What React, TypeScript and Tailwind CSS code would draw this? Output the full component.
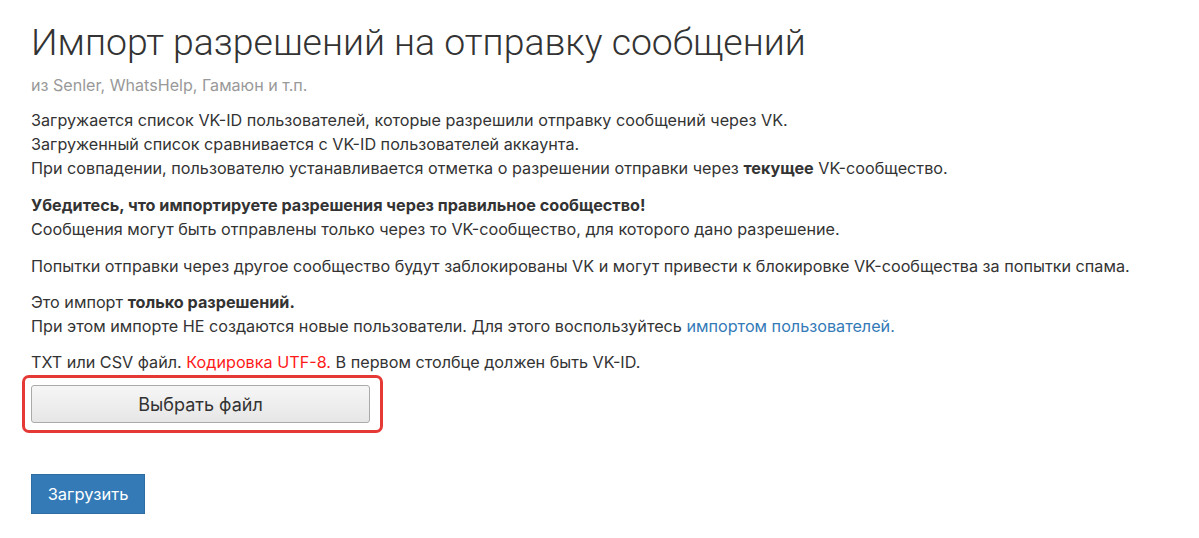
export default function App() {
  return (
    <div className="min-h-[538px] bg-white px-[31px] pt-[18px] text-[#333]" style={{ fontFamily: 'Inter, "Noto Sans", sans-serif' }}>
      <h1 className="text-[37.4px] leading-[48px] font-light text-[#333]" style={{ fontFamily: 'Roboto, Inter, sans-serif' }}>
        Импорт разрешений на отправку сообщений
      </h1>
      <div className="mt-[8px] text-[16.1px] leading-[22px] text-[#999]">из Senler, WhatsHelp, Гамаюн и т.п.</div>

      <div className="mt-[12px] text-[16.2px] leading-[24px]">
        <p>Загружается список VK-ID пользователей, которые разрешили отправку сообщений через VK.</p>
        <p>Загруженный список сравнивается с VK-ID пользователей аккаунта.</p>
        <p>
          При совпадении, пользователю устанавливается отметка о разрешении отправки через <b>текущее</b> VK-сообщество.
        </p>
        <p className="mt-[13px] font-bold">Убедитесь, что импортируете разрешения через правильное сообщество!</p>
        <p>Сообщения могут быть отправлены только через то VK-сообщество, для которого дано разрешение.</p>
        <p className="mt-[13px]">
          Попытки отправки через другое сообщество будут заблокированы VK и могут привести к блокировке VK-сообщества за попытки спама.
        </p>
        <p className="mt-[12px]">
          Это импорт <b>только разрешений.</b>
        </p>
        <p>
          При этом импорте НЕ создаются новые пользователи. Для этого воспользуйтесь{' '}
          <span className="text-[#337ab7]">импортом пользователей.</span>
        </p>
        <p className="mt-[12px]">
          TXT или CSV файл. <span className="text-[#ff1a1a]">Кодировка UTF-8.</span> В первом столбце должен быть VK-ID.
        </p>
      </div>

      <div className="mt-[1px] ml-[-9px] w-[361px] rounded-[7px] border-[3px] border-[#e53935] pt-[7px] pb-[7px] pl-[6px] pr-[10px]">
        <button className="block h-[38px] w-[339px] rounded-[3px] border border-[#aaa] bg-gradient-to-b from-[#f6f6f6] to-[#e6e6e6] text-[18px] text-[#333]">
          Выбрать файл
        </button>
      </div>

      <button className="mt-[41px] h-[40px] w-[114px] border border-[#2e6da4] bg-[#337ab7] text-[16.5px] text-white">
        Загрузить
      </button>
    </div>
  );
}
